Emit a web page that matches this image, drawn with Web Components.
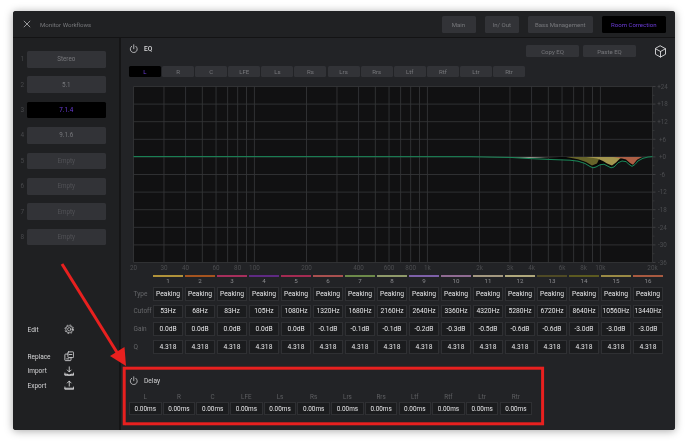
<!DOCTYPE html>
<html>
<head>
<meta charset="utf-8">
<title>Monitor Workflows</title>
<style>
  html, body { margin: 0; background: #fff; }
  body { width: 688px; height: 445px; overflow: hidden; font-family: Roboto, "Liberation Sans", sans-serif; }
</style>
</head>
<body>
<monitor-window></monitor-window>

<script>
const { customElements, HTMLElement } = window

const ICONS = {
  close: '<path d="M1.5 1.5l8 8M9.5 1.5l-8 8"/>',
  power: '<path d="M6 1v5"/><path d="M3.4 2.8a4.4 4.4 0 1 0 5.2 0"/>',
  cube: '<path d="M7 1l5.4 3v6L7 13l-5.4-3V4z"/><path d="M1.6 4L7 7l5.4-3M7 7v6"/>',
  gear: '<circle cx="6" cy="6" r="1.9" stroke-width=".8"/><circle cx="6" cy="6" r="4" stroke-width=".8"/><circle cx="6" cy="6" r="4.9" stroke-width=".9" stroke-linecap="butt" stroke-dasharray="1.9 1.95"/>',
  replace: '<rect x="4.5" y="1" width="6.5" height="6.5" rx=".8"/><path d="M4.5 3.5H1.8a.8.8 0 0 0-.8.8V10.2a.8.8 0 0 0 .8.8H7.2a.8.8 0 0 0 .8-.8V7.5"/><path d="M3 9h2.5M6 4h3"/>',
  import: '<path d="M6 1v5.5M3.8 4.6L6 6.8l2.2-2.2"/><path d="M1 8v2.6h10V8"/><path d="M1 9.4h3l.6.8h2.8l.6-.8h3" stroke-width="1.2"/>',
  export: '<path d="M6 7V1.4M3.8 3.4L6 1.2l2.2 2.2"/><path d="M1 8v2.6h10V8"/><path d="M1 9.4h10" stroke-width="1.2"/>'
}

const icon = (name, size, box) => `<svg width="${size}" height="${size}" viewBox="0 0 ${box} ${box}" fill="none" stroke="currentColor" stroke-width="1" stroke-linecap="round" stroke-linejoin="round">${ICONS[name]}</svg>`

class ShadowBase extends HTMLElement {
  constructor () {
    super()
    this.attachShadow({ mode: 'open' })
    this.shadowRoot.innerHTML = this.render()
  }
}

class NavButton extends ShadowBase {
  render () {
    return `<style>
      :host { display: flex; align-items: center; justify-content: center; background: #323337; border-radius: 1.5px; color: #77787c; font-size: 6.05px; white-space: nowrap; }
      :host([active]) { background: #000; color: #6a3bd6; }
      :host([dim]) { color: #515256; }
    </style><slot></slot>`
  }
}

class ValueCell extends ShadowBase {
  render () {
    return `<style>
      :host { display: flex; align-items: center; justify-content: center; box-sizing: border-box; background: #1b1c1e; border: 1px solid #2f3033; color: #e6e6e8; font-size: 6.4px; white-space: nowrap; }
    </style><slot></slot>`
  }
}

class PresetRow extends ShadowBase {
  render () {
    const n = this.getAttribute('n')
    const active = this.hasAttribute('active') ? 'active' : ''
    const dim = this.hasAttribute('dim') ? 'dim' : ''
    return `<style>
      :host { display: grid; grid-template-columns: 14px 78.5px; align-items: stretch; }
      span { align-self: center; color: #48494c; font-size: 6.4px; padding-left: 7.5px; }
      nav-button { font-size: 6.3px; }
    </style><span>${n}</span><nav-button ${active} ${dim}><slot></slot></nav-button>`
  }
}

class ActionRow extends ShadowBase {
  render () {
    return `<style>
      :host { display: grid; grid-template-columns: 36px 14px; align-items: center; height: 14.5px; color: #d4d4d6; font-size: 6.5px; }
      svg { display: block; }
    </style><slot></slot>${icon(this.getAttribute('icon'), 10.5, 12)}`
  }
}

class PresetSidebar extends ShadowBase {
  render () {
    const rows = ['Stereo', '5.1', '7.1.4', '9.1.6', 'Empty', 'Empty', 'Empty', 'Empty']
    return `<style>
      :host { display: block; box-sizing: border-box; width: 108px; height: 100%; padding: 13px 0 0 0; background: #1f2022; border-right: 2px solid #151516; }
      .presets { display: grid; grid-auto-rows: 16.6px; row-gap: 8.8px; }
      .actions { margin-top: 77px; padding-left: 14.5px; }
      .gap { height: 12.5px; }
    </style>
    <div class="presets">
      ${rows.map((r, i) => `<preset-row n="${i + 1}" ${r === '7.1.4' ? 'active' : ''} ${r === 'Empty' ? 'dim' : ''}>${r}</preset-row>`).join('')}
    </div>
    <div class="actions">
      <action-row icon="gear">Edit</action-row>
      <div class="gap"></div>
      <action-row icon="replace">Replace</action-row>
      <action-row icon="import">Import</action-row>
      <action-row icon="export">Export</action-row>
    </div>`
  }
}

const F_MARKS = [[20, '20'], [30, '30'], [40, '40'], [50], [60, '60'], [70], [80, '80'], [90], [100, '100'], [200, '200'], [300], [400, '400'], [500], [600, '600'], [700], [800, '800'], [900], [1000, '1k'], [2000, '2k'], [3000, '3k'], [4000, '4k'], [5000], [6000, '6k'], [7000], [8000, '8k'], [9000], [10000, '10k'], [20000, '20k']]
const DB = ['+24', '+18', '+12', '+6', '+0', '-6', '-12', '-18', '-24', '-30', '-36']

class EqGraph extends ShadowBase {
  render () {
    const left = 4.5
    const top = 0.5
    const w = 519
    const h = 176
    const fx = f => left + Math.log10(f / 20) * (w / 3)
    const ln = (x1, y1, x2, y2, c, sw = 1) => `<line x1="${x1}" y1="${y1}" x2="${x2}" y2="${y2}" stroke="${c}" stroke-width="${sw}"/>`
    let grid = ''
    let labels = ''
    F_MARKS.forEach(([f, t]) => {
      const x = fx(f)
      grid += ln(x, top, x, top + h, '#333437', 0.9)
      if (t) labels += `<text x="${x}" y="${top + h + 7.6}" text-anchor="middle">${t}</text>`
    })
    DB.forEach((t, i) => {
      const y = top + i * h / 10
      grid += ln(left, y, left + w, y, '#333437', 0.9)
      grid += ln(left + w, y, left + w + 3, y, '#4a4b4e', 0.7)
      if (i < 10) grid += ln(left + w, y + h / 20, left + w + 2, y + h / 20, '#3e3f42', 0.6)
      labels += `<text x="${left + w + 10}" y="${y + 2.3}" text-anchor="middle">${t}</text>`
    })
    const base = top + 4 * h / 10
    const b = base + 85
    const off = (x, y) => `${x - 129},${y - 85}`
    const poly = (pts, c) => `<polygon points="${pts.map(p => off(p[0], p[1])).join(' ')}" fill="${c}"/>`
    const curve = [[133.5, 155.6], [470, 155.7], [510, 156.4], [530, 157.6], [553, 158.6], [570, 159.2], [578, 160.2], [585, 162.5], [590, 165.5], [593, 166.8], [596, 166], [600, 163.8], [604, 163.2], [608, 165.3], [611, 166.8], [614, 166], [618, 161.8], [622, 160], [626, 160.6], [629, 163.3], [632, 165.4], [635, 163.5], [638, 160], [643, 157.3], [648, 156], [652.5, 155.6]]
    return `<style>
      :host { display: block; width: 543px; height: 187px; }
      svg { display: block; overflow: visible; }
      text { font-size: 6.3px; fill: #4c4d50; font-family: Roboto, "Liberation Sans", sans-serif; }
    </style>
    <svg width="543" height="187" viewBox="0 0 543 187">
      <rect x="${left}" y="${top}" width="${w}" height="${h}" fill="#111112"/>
      ${grid}
      ${poly([[540, b], [640, b], [632, 164.5], [628, 162], [622, 159], [616, 164], [611, 165.8], [606, 163], [602, 163], [596, 165], [592, 165.8], [586, 162], [578, 159], [555, 157.8]], '#060606')}
      ${poly([[566, b], [600, b], [597, 162.5], [592, 164.4], [586, 161], [578, 158.3]], '#65632a')}
      ${poly([[586, b], [626, b], [620, 157.5], [616, 161.5], [612, 164.6], [607, 162.5], [603, 160], [597, 157.5]], '#a3964f')}
      ${poly([[613, b], [642, b], [637, 158.8], [633, 163.8], [630, 162], [626, 158.6], [620, 157]], '#ad5f45')}
      ${poly([[480, b], [560, b], [530, 157], [500, 156.3]], '#5d5b54')}
      ${poly([[514, b], [545, b], [530, 156.9]], '#99988f')}
      <polyline points="${curve.map(p => off(p[0], p[1])).join(' ')}" fill="none" stroke="#1a8a5a" stroke-width="1"/>
      ${labels}
    </svg>`
  }
}

const BAND_COLORS = ['#b0923a', '#a5541f', '#a62f5c', '#5e2a82', '#a32b52', '#a8504f', '#6d8a4a', '#8f9a6a', '#7d60a8', '#8f6b92', '#a39880', '#b0a87c', '#4f4a25', '#5c5a20', '#9a8a45', '#a85a40']
const CUTOFFS = [53, 68, 83, 105, 1080, 1320, 1680, 2160, 2640, 3360, 4320, 5280, 6720, 8640, 10560, 13440]
const GAINS = ['0.0', '0.0', '0.0', '0.0', '0.0', '-0.1', '-0.1', '-0.1', '-0.2', '-0.3', '-0.5', '-0.6', '-0.6', '-3.0', '-3.0', '-3.0']

class BandTable extends ShadowBase {
  render () {
    const row = (label, fn) => `<span class="label">${label}</span>` + BAND_COLORS.map((c, i) => `<value-cell>${fn(i)}</value-cell>`).join('')
    return `<style>
      :host { display: block; width: 536px; }
      .heads, .rows { display: grid; grid-template-columns: 22px repeat(16, 30px); column-gap: 2px; }
      .heads { grid-template-rows: 2px 9.5px; margin-bottom: .5px; }
      .rows { grid-auto-rows: 13.5px; row-gap: 4.2px; }
      .num { text-align: center; color: #8a8b8e; font-size: 6.2px; line-height: 9.5px; }
      .label { align-self: center; color: #66676a; font-size: 6.5px; padding-left: 4.5px; white-space: nowrap; }
      value-cell { font-size: 6.7px; }
      value-cell.wide { font-size: 6.3px; }
    </style>
    <div class="heads">
      <span></span>${BAND_COLORS.map(c => `<div style="background:${c}"></div>`).join('')}
      <span></span>${BAND_COLORS.map((c, i) => `<div class="num">${i + 1}</div>`).join('')}
    </div>
    <div class="rows">
      ${row('Type', () => 'Peaking')}
      ${row('Cutoff', i => CUTOFFS[i] + 'Hz')}
      ${row('Gain', i => GAINS[i] + 'dB')}
      ${row('Q', () => '4.318')}
    </div>`
  }
}

const CHANNELS = ['L', 'R', 'C', 'LFE', 'Ls', 'Rs', 'Lrs', 'Rrs', 'Ltf', 'Rtf', 'Ltr', 'Rtr']

class DelayPanel extends ShadowBase {
  render () {
    return `<style>
      :host { display: block; color: #d0d0d2; }
      .head { display: flex; align-items: center; gap: 5.5px; font-size: 6.6px; height: 14px; }
      .grid { display: grid; grid-template-columns: repeat(12, 32.5px); column-gap: 1.2px; margin-top: 5px; }
      .ch { text-align: center; color: #5f6063; font-size: 6.3px; height: 9.5px; line-height: 9px; }
      value-cell { height: 13.4px; }
      svg { display: block; }
    </style>
    <div class="head">${icon('power', 9.5, 12)}<span>Delay</span></div>
    <div class="grid">
      ${CHANNELS.map(c => `<div><div class="ch">${c}</div><value-cell>0.00ms</value-cell></div>`).join('')}
    </div>`
  }
}

class EqPanel extends ShadowBase {
  render () {
    return `<style>
      :host { display: block; box-sizing: border-box; flex: 1; min-width: 0; padding: 1px 0 0 8px; background: #222326; }
      svg { display: block; }
      .head { display: flex; align-items: center; height: 20px; padding-right: 8px; color: #d8d8da; font-size: 6.6px; font-weight: 500; }
      .head .title { margin-left: 5.5px; flex: 1; }
      .head nav-button { width: 53px; height: 12px; margin-right: 4px; margin-top: 4px; font-weight: 400; }
      .cube { margin: 4px 0 0 14px; color: #d8d8da; }
      .tabs { display: grid; grid-template-columns: repeat(12, 32px); column-gap: 1.1px; grid-auto-rows: 11px; margin-top: 6.5px; }
      eq-graph { margin-top: 9.5px; }
      band-table { margin-top: 2px; }
      delay-panel { margin-top: 20px; }
    </style>
    <div class="head">
      ${icon('power', 9.5, 12)}<span class="title">EQ</span>
      <nav-button>Copy EQ</nav-button><nav-button>Paste EQ</nav-button>
      <span class="cube">${icon('cube', 13, 14)}</span>
    </div>
    <div class="tabs">
      ${CHANNELS.map((c, i) => `<nav-button ${i === 0 ? 'active' : ''}>${c}</nav-button>`).join('')}
    </div>
    <eq-graph></eq-graph>
    <band-table></band-table>
    <delay-panel></delay-panel>`
  }
}

class TopBar extends ShadowBase {
  render () {
    return `<style>
      :host { display: flex; align-items: center; box-sizing: border-box; height: 27px; padding: 0 9px 0 10px; background: #202123; border-bottom: 1px solid #131314; }
      .close { color: #c4c4c6; display: block; }
      .title { margin-left: 9px; flex: 1; color: #77787b; font-size: 6.1px; }
      nav-button { height: 17px; margin-left: 9px; margin-top: 1px; }
      svg { display: block; }
    </style>
    <span class="close">${icon('close', 8, 11)}</span>
    <span class="title">Monitor Workflows</span>
    <nav-button style="width:34px">Main</nav-button>
    <nav-button style="width:34.5px">In/ Out</nav-button>
    <nav-button style="width:64.5px">Bass Management</nav-button>
    <nav-button style="width:64.5px" active>Room Correction</nav-button>`
  }
}

// red annotation drawn over the screenshot: arrow plus the box round Delay
class CalloutOverlay extends ShadowBase {
  render () {
    return `<style>
      :host { position: absolute; left: 0; top: 0; width: 688px; height: 445px; pointer-events: none; }
      svg { display: block; }
    </style>
    <svg width="688" height="445" viewBox="0 0 688 445">
      <line x1="62" y1="264" x2="118" y2="354" stroke="#e8201f" stroke-width="3"/>
      <polygon points="110,356 124.5,347 126,366" fill="#e8201f"/>
      <rect x="124.2" y="368.2" width="418.4" height="55.6" fill="none" stroke="#e8201f" stroke-width="3"/>
    </svg>`
  }
}

class MonitorWindow extends ShadowBase {
  render () {
    return `<style>
      :host { display: block; box-sizing: border-box; width: 688px; height: 445px; padding: 11px 13px 15px; filter: blur(.3px); position: relative; }
      .win { display: flex; flex-direction: column; height: 100%; border-radius: 3px; overflow: hidden; box-shadow: 0 1px 8px rgba(0,0,0,.35); background: #222326; }
      .body { display: flex; flex: 1; min-height: 0; }
    </style>
    <div class="win">
      <top-bar></top-bar>
      <div class="body">
        <preset-sidebar></preset-sidebar>
        <eq-panel></eq-panel>
      </div>
    </div>
    <callout-overlay></callout-overlay>`
  }
}

customElements.define('nav-button', NavButton)
customElements.define('value-cell', ValueCell)
customElements.define('preset-row', PresetRow)
customElements.define('action-row', ActionRow)
customElements.define('preset-sidebar', PresetSidebar)
customElements.define('eq-graph', EqGraph)
customElements.define('band-table', BandTable)
customElements.define('delay-panel', DelayPanel)
customElements.define('eq-panel', EqPanel)
customElements.define('top-bar', TopBar)
customElements.define('callout-overlay', CalloutOverlay)
customElements.define('monitor-window', MonitorWindow)
</script>
</body>
</html>
